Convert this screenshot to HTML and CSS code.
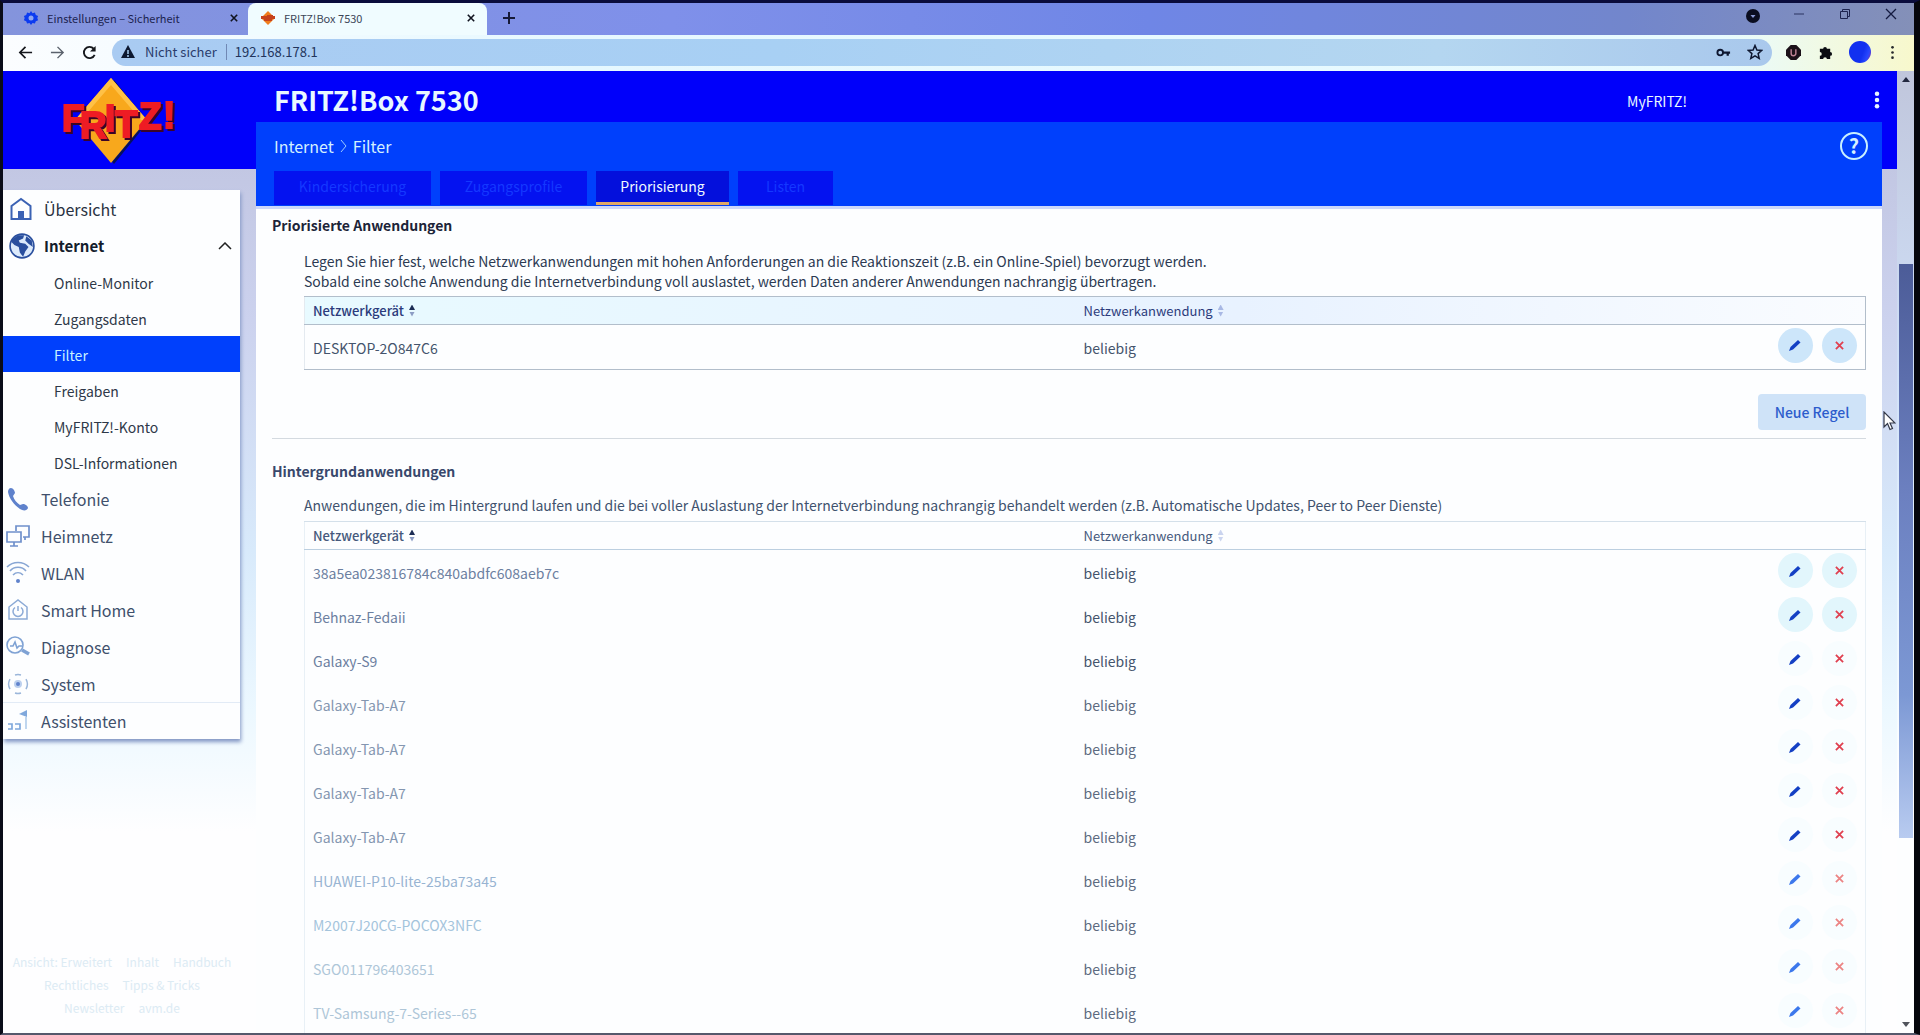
FILE: index.html
```
<!DOCTYPE html>
<html lang="de">
<head>
<meta charset="utf-8">
<title>FRITZ!Box 7530</title>
<link rel="stylesheet" href="styles.css">
</head>
<body>
<div class="screen">
  <header class="browser">
    <div class="tabstrip">
      <div class="tab">
        <svg class="fav" viewBox="0 0 16 16"><path d="M8 1l1.500 2.200 2.400-.6.9 2.300 2.300 1L14.300 8l.8 2.200-2.300 1-.9 2.300-2.400-.6L8 15l-1.500-2.100-2.400.6-.9-2.300-2.300-1L1.700 8 .9 5.900l2.300-1 .9-2.300 2.400.6z" fill="#0c3bf0"/><circle cx="8" cy="8" r="2.500" fill="#8fa6f0"/></svg>
        <span class="tab-title">Einstellungen – Sicherheit</span>
        <button class="tab-close" aria-label="Tab schließen"><svg viewBox="0 0 10 10"><path d="M1 1l8 8M9 1l-8 8" stroke="#10131f" stroke-width="2"/></svg></button>
      </div>
      <div class="tab active">
        <svg class="fav" viewBox="0 0 16 16"><path d="M8 1l7 7-7 7-7-7z" fill="#f07d1c"/><path d="M1 6h6v-1h6v1h2v3h-3v2H4V9H1z" fill="#c6421c"/></svg>
        <span class="tab-title">FRITZ!Box 7530</span>
        <button class="tab-close" aria-label="Tab schließen"><svg viewBox="0 0 10 10"><path d="M1 1l8 8M9 1l-8 8" stroke="#10131f" stroke-width="2"/></svg></button>
      </div>
      <button class="newtab" aria-label="Neuer Tab"><svg viewBox="0 0 12 12"><path d="M6 0v12M0 6h12" stroke="#161a38" stroke-width="2"/></svg></button>
      <div class="window-buttons">
        <button aria-label="Tabs suchen"><svg class="search" viewBox="0 0 16 16"><circle cx="8" cy="8" r="7" fill="#0a0d20"/><path d="M5.500 7h5L8 10z" fill="#8c9cd8"/></svg></button>
        <button aria-label="Minimieren"><svg viewBox="0 0 16 16"><path d="M3 8h10" stroke="#2b3360"/></svg></button>
        <button aria-label="Verkleinern"><svg viewBox="0 0 16 16" fill="none" stroke="#1e2450"><path d="M3.500 5.500h7v7h-7zM5.500 5.500v-2h7v7h-2"/></svg></button>
        <button aria-label="Schließen"><svg viewBox="0 0 16 16"><path d="M3 3l10 10M13 3L3 13" stroke="#141a40" stroke-width="1.300"/></svg></button>
      </div>
    </div>
    <div class="toolbar">
      <button class="nav" aria-label="Zurück"><svg viewBox="0 0 16 16" fill="none" stroke="#15171c" stroke-width="1.800"><path d="M15 8H2M8 2L2 8l6 6"/></svg></button>
      <button class="nav" aria-label="Vorwärts"><svg viewBox="0 0 16 16" fill="none" stroke="#5a616c" stroke-width="1.500"><path d="M1 8h13M8 2l6 6-6 6"/></svg></button>
      <button class="nav" aria-label="Neu laden"><svg viewBox="0 0 16 16" fill="none" stroke="#15171c" stroke-width="2"><path d="M13.500 10.500A6 6 0 1 1 12.500 4"/><path d="M14.500 1v6h-6z" fill="#15171c" stroke="none"/></svg></button>
      <div class="address">
        <svg class="warn" viewBox="0 0 14 14"><path d="M7 0l7 13H0z" fill="#0d1830"/><path d="M7 5v4M7 10v2" stroke="#a6cdf0" stroke-width="1.500"/></svg>
        <span class="insecure">Nicht sicher</span>
        <input class="url" type="text" value="192.168.178.1" aria-label="Adresse">
        <svg class="key" viewBox="0 0 16 16"><circle cx="4.500" cy="8" r="3" fill="none" stroke="#0e1730" stroke-width="2"/><path d="M7 8h8M12.500 8v3.500" stroke="#0e1730" stroke-width="2.400"/></svg>
        <svg class="star" viewBox="0 0 16 16"><path d="M8 1.500l1.900 4.500 4.900.4-3.700 3.200 1.100 4.800L8 11.800l-4.200 2.600 1.100-4.800L1.200 6.400l4.900-.4z" fill="none" stroke="#0e1730" stroke-width="1.500"/></svg>
      </div>
      <button class="ext" aria-label="uBlock"><svg viewBox="0 0 16 16"><path d="M5 0h6l5 5v6l-5 5H5l-5-5V5z" fill="#1b1119"/><path d="M5.500 4.500v4.500a2.500 2.500 0 0 0 5 0V4.500" fill="none" stroke="#c08496" stroke-width="1.500"/></svg></button>
      <button class="ext" aria-label="Erweiterungen"><svg viewBox="0 0 16 16"><path d="M2 4h3.500a2 2 0 1 1 4 0H13v3.500a2 2 0 1 1 0 4V15H9.500a2 2 0 0 0-4 0H2v-3.500a2 2 0 0 0 0-4z" fill="#0b0d12"/></svg></button>
      <button class="avatar" aria-label="Profil"></button>
      <button class="ext" aria-label="Menü"><svg viewBox="0 0 16 16" fill="#26282c"><circle cx="8" cy="2.500" r="1.400"/><circle cx="8" cy="8" r="1.400"/><circle cx="8" cy="13.500" r="1.400"/></svg></button>
    </div>
  </header>

  <div class="viewport">
    <div class="page">
      <aside class="side">
        <a class="logo" href="#" aria-label="FRITZ!">
          <svg viewBox="0 0 124 86">
            <path d="M52 2l34 42-34 42-34-42z" fill="#061060"/>
            <path d="M49 0l36 42-36 43-36-43z" fill="#f8a81c"/>
            <path d="M49 0l36 42h-6L49 7 19 42h-6z" fill="#ffc146"/>
            <text class="logo-text" x="0 18 43 53 77 101" y="53 60 53 59 51 50">FRITZ!</text>
          </svg>
        </a>
        <nav class="menu">
          <a class="item" href="#"><svg viewBox="0 0 24 24" fill="none" stroke="#3b62b4" stroke-width="2"><path d="M2.500 9L12 2l9.500 7v13h-19z"/><path d="M9 14h6v8H9z" fill="#3b62b4" stroke="none"/></svg>Übersicht</a>
          <a class="item open" href="#"><svg class="globe" viewBox="0 0 24 24"><circle cx="12" cy="12" r="11" fill="#dceafb" stroke="#2a4f9e" stroke-width="1.500"/><path d="M3 6l5-4 6 0-1 3-4 2 1 2 5 1 3 3-3 4-2 5-3-4-1-5-4-2-3-3zM16 3l5 4 1 6-4-3-3-3z" fill="#2a4f9e"/></svg>Internet<svg class="chev" viewBox="0 0 14 8"><path d="M1 7l6-6 6 6" fill="none" stroke="#222" stroke-width="1.500"/></svg></a>
          <a class="sub" href="#">Online-Monitor</a>
          <a class="sub" href="#">Zugangsdaten</a>
          <a class="sub current" href="#">Filter</a>
          <a class="sub" href="#">Freigaben</a>
          <a class="sub" href="#">MyFRITZ!-Konto</a>
          <a class="sub" href="#">DSL-Informationen</a>
          <a class="item low" href="#"><svg viewBox="0 0 24 24"><path d="M5 1c2 0 4 3 4 5l-2 3c1 4 4 7 7 9l3-1c2 0 5 2 5 4-1 3-5 3-8 1C8 18 3 11 2 5c0-2 1-4 3-4z" fill="#5f82cc"/></svg>Telefonie</a>
          <a class="item low" href="#"><svg viewBox="0 0 24 24" fill="none" stroke="#6f90cc" stroke-width="1.700"><path d="M10 7V2h13v11h-6M1 8h14v10H1zM8 18v4M4 22h8M19 13v3"/></svg>Heimnetz</a>
          <a class="item low" href="#"><svg viewBox="0 0 24 24" fill="none" stroke="#88a6d4" stroke-width="1.600"><path d="M1 6c6-6 16-6 22 0M4 10c4-5 12-5 16 0M7 14c3-3 7-3 10 0"/><circle cx="12" cy="20" r="2" fill="#5f82cc" stroke="none"/></svg>WLAN</a>
          <a class="item low" href="#"><svg viewBox="0 0 24 24" fill="none" stroke="#8caad6" stroke-width="1.500"><path d="M3 9l9-7 9 7v12H3z"/><path d="M9 9.500a5 5 0 1 0 6 0M12 8v5"/></svg>Smart Home</a>
          <a class="item low" href="#"><svg viewBox="0 0 24 24" fill="none" stroke="#7fa2d4" stroke-width="1.600"><circle cx="9" cy="10" r="8"/><path d="M4 11h3l2-4 2 6 2-2h3"/><path d="M16 15l7 4" stroke-width="3.500"/></svg>Diagnose</a>
          <a class="item low" href="#"><svg viewBox="0 0 24 24" fill="none" stroke="#9bb6da" stroke-width="1.500"><path d="M9 3a10 10 0 0 1 6 0M9 21a10 10 0 0 0 6 0M4 7a10 10 0 0 0 0 10M20 7a10 10 0 0 1 0 10"/><circle cx="12" cy="12" r="3" fill="#5f82cc" stroke="#bcd0ee" stroke-width="2"/></svg>System</a>
          <a class="item low last" href="#"><svg viewBox="0 0 24 24" fill="none" stroke="#7fa8dc" stroke-width="1.700"><path d="M2 15h4v5H2M9 15h5v5H9"/><path d="M13 5l8-4v7z" fill="#7fa8dc" stroke="none"/><path d="M20 8v12" stroke="#b4cfec"/></svg>Assistenten</a>
        </nav>
        <footer class="links">
          <div><a href="#">Ansicht: Erweitert</a><a href="#">Inhalt</a><a href="#">Handbuch</a></div>
          <div><a href="#">Rechtliches</a><a href="#">Tipps &amp; Tricks</a></div>
          <div><a href="#">Newsletter</a><a href="#">avm.de</a></div>
        </footer>
      </aside>

      <main class="main">
        <div class="top">
          <h1>FRITZ!Box 7530</h1>
          <a class="myfritz" href="#">MyFRITZ!</a>
          <button class="dots" aria-label="Menü"><svg viewBox="0 0 6 20" fill="#e8f4ff"><circle cx="3" cy="3" r="2.500"/><circle cx="3" cy="10" r="2.500"/><circle cx="3" cy="17" r="2.500"/></svg></button>
        </div>
        <div class="bluebar">
          <div class="crumbs">
            <span>Internet</span><svg viewBox="0 0 7 14"><path d="M1 1l5 6-5 6" fill="none" stroke="#9fcbff"/></svg><span>Filter</span>
            <button class="help" aria-label="Hilfe">?</button>
          </div>
          <nav class="tabs">
            <a class="t1" href="#">Kindersicherung</a>
            <a class="t2" href="#">Zugangsprofile</a>
            <a class="t3 on" href="#">Priorisierung</a>
            <a class="t4" href="#">Listen</a>
          </nav>
        </div>
        <div class="content">
          <section>
            <h2>Priorisierte Anwendungen</h2>
            <p>Legen Sie hier fest, welche Netzwerkanwendungen mit hohen Anforderungen an die Reaktionszeit (z.B. ein Online-Spiel) bevorzugt werden.<br>Sobald eine solche Anwendung die Internetverbindung voll auslastet, werden Daten anderer Anwendungen nachrangig übertragen.</p>
            <table class="first">
              <thead><tr><th class="dev">Netzwerkgerät<i class="sort asc"></i></th><th>Netzwerkanwendung<i class="sort"></i></th><th class="act"></th></tr></thead>
              <tbody><tr><td>DESKTOP-2O847C6</td><td>beliebig</td><td class="act"><div class="buttons"><button aria-label="Bearbeiten"><svg class="pen" viewBox="0 0 14 14"><path d="M1 13l1.500-4L10 2l2.500 2.500L5 11.500z"/></svg></button><button aria-label="Löschen"><svg class="del" viewBox="0 0 10 10"><path d="M1 1l8 8M9 1L1 9"/></svg></button></div></td></tr></tbody>
            </table>
            <div class="action"><button class="new">Neue Regel</button></div>
          </section>
          <section class="second">
            <h2>Hintergrundanwendungen</h2>
            <p>Anwendungen, die im Hintergrund laufen und die bei voller Auslastung der Internetverbindung nachrangig behandelt werden (z.B. Automatische Updates, Peer to Peer Dienste)</p>
            <table class="background">
              <thead><tr><th class="dev">Netzwerkgerät<i class="sort asc"></i></th><th>Netzwerkanwendung<i class="sort"></i></th><th class="act"></th></tr></thead>
              <tbody id="rules"></tbody>
            </table>
          </section>
        </div>
      </main>
    </div>
    <div class="scrollbar"><span class="up"></span><span class="thumb"></span><span class="down"></span></div>
  </div>
  <svg class="cursor" viewBox="0 0 13 20"><path d="M1 1v15l3.500-3.500L7 18.500l2.500-1L7 12h5z" fill="#fff" stroke="#333848" stroke-width="1.200"/></svg>
</div>
<script src="rules.js"></script>
</body>
</html>
```
FILE: rules.js
```
const devices = [
  "38a5ea023816784c840abdfc608aeb7c", "Behnaz-Fedaii", "Galaxy-S9",
  "Galaxy-Tab-A7", "Galaxy-Tab-A7", "Galaxy-Tab-A7", "Galaxy-Tab-A7",
  "HUAWEI-P10-lite-25ba73a45", "M2007J20CG-POCOX3NFC", "SGO011796403651",
  "TV-Samsung-7-Series--65"
];
const actions = document.querySelector(".first .buttons");
const body = document.getElementById("rules");
for (const name of devices) {
  const row = body.insertRow();
  row.insertCell().textContent = name;
  row.insertCell().textContent = "beliebig";
  const cell = row.insertCell();
  cell.className = "act";
  cell.append(actions.cloneNode(true));
}
```
FILE: styles.css
```
* { box-sizing: border-box; }
body {
  margin: 0;
  background: #000;
  font: 14px/20px "Noto Sans CJK SC", "Noto Sans", sans-serif;
  color: #2c3a52;
}
a { color: inherit; text-decoration: none; }
button { border: 0; padding: 0; background: none; font: inherit; color: inherit; display: flex; align-items: center; justify-content: center; }
svg { display: block; flex: none; }

.screen {
  height: 100vh;
  overflow: hidden;
  position: relative;
  display: flex;
  flex-direction: column;
  border-style: solid;
  border-width: 3px 6px 2px 3px;
  border-color: #0a0c3c #05060c #55586c #0a0c18;
}

/* browser frame */
.browser { flex: none; font-size: 11px; }
.tabstrip {
  height: 32px;
  display: flex;
  background: linear-gradient(90deg, #8494dc, #7f90ea 35%, #6f86e6 60%, #7286cc 85%, #8490b8);
}
.tab { width: 245px; display: flex; align-items: center; padding: 0 10px 2px 20px; color: #1c2350; }
.tab.active { width: 239px; padding: 0 12px 2px 12px; background: #f0fcff; border-radius: 8px 8px 0 0; color: #3c4658; }
.fav { width: 16px; height: 16px; margin-right: 8px; }
.tab-title { flex: 1; white-space: nowrap; }
.tab-close svg { width: 8px; height: 8px; }
.newtab { width: 44px; padding-bottom: 2px; }
.newtab svg { width: 12px; height: 12px; }
.window-buttons { margin-left: auto; display: flex; padding-right: 15px; gap: 30px; align-items: center; height: 22px; }
.window-buttons svg { width: 16px; height: 16px; }
.window-buttons .search { margin: 4px 0 0; }
.toolbar {
  height: 36px;
  display: flex;
  align-items: center;
  padding: 0 14px 2px 6px;
  background: linear-gradient(90deg, #fbfdff, #e6f8ff 30%, #e8fbff 90%, #f8f8cc);
}
.nav { width: 32px; justify-content: center; }
.nav svg { width: 15px; height: 15px; }
.address {
  flex: 1;
  margin: 0 13px 0 7px;
  height: 27px;
  border-radius: 14px;
  display: flex;
  align-items: center;
  padding: 0 9px;
  background: linear-gradient(90deg, #a9cbf2, #a8d0f4 40%, #b4d6f0 80%, #a9c8ec);
  color: #2a3c6c;
}
.warn { width: 14px; height: 14px; margin-right: 10px; }
.insecure { font-size: 13px; padding-right: 9px; border-right: 1px solid #7088b4; line-height: 16px; }
.url { flex: 1; border: 0; padding: 0 0 0 8px; background: none; font: inherit; font-size: 13px; color: #22345c; outline: 0; }
.key { width: 15px; height: 15px; margin-right: 16px; }
.star { width: 16px; height: 16px; }
.ext { width: 16px; margin-right: 16px; }
.ext:last-child { margin-right: 0; }
.ext svg { width: 15px; height: 15px; }
.avatar { width: 22px; height: 22px; border-radius: 11px; margin-right: 13px; background: linear-gradient(110deg, #1230f0 60%, #2848ff 80%, #a02890); }

/* page */
.viewport { flex: 1; min-height: 0; display: flex; }
.page {
  flex: 1;
  min-width: 0;
  overflow: hidden;
  display: flex;
  padding-right: 15px;
  background:
    linear-gradient(#0000fa, #0000fa) 0 0 / 100% 98px no-repeat,
    linear-gradient(#bcc0dc, #ccd2ee 250px, #d8eafb 480px, #ecf8ff 640px, #fefeff 760px);
}
.side { width: 253px; flex: none; display: flex; flex-direction: column; }
.logo { height: 98px; padding: 7px 0 0 59px; }
.logo svg { width: 124px; height: 86px; }
.logo-text { font: 700 37px "Liberation Sans", sans-serif; fill: #ee1c24; stroke: #ee1c24; stroke-width: 2px; filter: drop-shadow(2px 2px 0 #3a0428); }
.menu { width: 237px; margin-top: 21px; background: #fdfeff; box-shadow: 1px 3px 4px #8296c4; }
.item { height: 37px; display: flex; align-items: center; font-size: 16px; color: #2a3242; padding: 0 8px 0 6px; }
.item svg { width: 24px; height: 24px; margin-right: 11px; }
.item .globe { width: 26px; height: 26px; margin-right: 9px; }
.item .chev { width: 14px; height: 8px; margin: 0 0 0 auto; }
.item.open { font-weight: 700; color: #141c2c; font-size: 15px; }
.item.low { color: #40506c; padding-left: 3px; }
.item.last { border-top: 1px solid #e2ebf6; }
.sub { height: 36px; display: flex; align-items: center; padding: 2px 0 0 51px; font-size: 14px; color: #2e3848; }
.sub.current { background: #0040fc; color: #c8f0ff; }
.links { margin-top: 211px; width: 238px; font-size: 12px; line-height: 23px; color: #dcebf4; }
.links div { display: flex; justify-content: center; gap: 14px; }

.main { flex: 1; min-width: 0; }
.top { height: 51px; display: flex; align-items: center; padding-left: 18px; color: #e8f8ff; }
h1 { margin: 0; font-size: 27px; line-height: 40px; font-weight: 700; flex: 1; padding-top: 6px; }
.myfritz { font-size: 14px; padding-top: 8px; margin-right: 187px; }
.dots { padding-top: 6px; margin-right: 2px; }
.dots svg { width: 6px; height: 18px; }
.bluebar { height: 84px; padding: 0 14px 1px 18px; background: #0040fc; color: #d4f0ff; display: flex; flex-direction: column; justify-content: space-between; }
.crumbs { display: flex; align-items: center; font-size: 16px; height: 48px; gap: 6px; }
.crumbs svg { width: 7px; height: 14px; }
.help { margin-left: auto; width: 28px; height: 28px; border: 2px solid #c8f0ff; border-radius: 14px; font-size: 20px; font-weight: 700; line-height: 20px; }
.tabs { display: flex; gap: 9px; }
.tabs a { height: 34px; line-height: 31px; text-align: center; font-size: 14px; background: #0412f0; color: #1438ff; }
.tabs .t1 { width: 157px; }
.tabs .t2 { width: 147px; }
.tabs .t3 { width: 133px; }
.tabs .t4 { width: 95px; }
.tabs .on { background: #0410dc; color: #f0faff; border-bottom: 3px solid #e0a868; }

.content { background: #fdfeff; min-height: 830px; padding: 0 16px; border-top: 3px solid #ccd8fa; }
h2 { margin: 0; padding-top: 6px; font-size: 14px; line-height: 20px; font-weight: 700; color: #1c2438; }
p { margin: 16px 0 0; padding-left: 32px; white-space: nowrap; }
table { width: calc(100% - 32px); margin: 5px 0 0 32px; border-collapse: collapse; table-layout: fixed; border: 1px solid #b2becb; }
th, td { padding: 0 8px; text-align: left; font-weight: 400; }
th { height: 28px; font-size: 13px; line-height: 20px; border-bottom: 1px solid #b2becb; color: #2c3c7c; }
td { height: 45px; padding-top: 2px; color: #44546c; }
.first { border-left-color: #e4eaf0; }
.first thead { background: linear-gradient(90deg, #e8faff, #e8f2ff 60%, #fafcff); }
th.dev { width: 771px; font-weight: 500; }
th.act { width: 88px; padding: 0; }
td.act { padding: 0 0 4px; }
.sort { display: inline-block; width: 6px; height: 12px; margin-left: 5px; vertical-align: -1px; background: linear-gradient(#a8b8e4 5px, transparent 5px 7px, #a8b8e4 7px); clip-path: polygon(50% 0, 100% 45%, 100% 55%, 50% 100%, 0 55%, 0 45%); }
.sort.asc { background: linear-gradient(#1c2c54 5px, transparent 5px 7px, #8c9cc4 7px); }
.buttons { display: flex; gap: 9px; }
.buttons button { width: 35px; height: 35px; border-radius: 18px; background: #cde6fa; }
.pen { width: 14px; height: 14px; fill: #1440c4; }
.del { width: 9px; height: 9px; fill: none; stroke: #e04050; stroke-width: 2; }
.action { display: flex; justify-content: flex-end; padding: 24px 0 8px; border-bottom: 1px solid #d4dae0; }
.new { width: 108px; height: 36px; border-radius: 4px; background: #cfe3f8; color: #2c5ccc; font-size: 14px; font-weight: 500; }
.second h2 { padding-top: 22px; color: #38486c; }
.second p { color: #40526e; margin-top: 14px; }
.second table { margin-top: 6px; border-color: #e8f0f6; border-bottom: 0; }
.second th { color: #46597c; border-color: #bccfe0; border-top: 1px solid #d4e0ea; }
.second td { height: 44px; }
.second .act { padding-bottom: 2px; }
.second td:first-child { color: #6c80a0; }
.second .sort:not(.asc) { opacity: .6; }
.second .buttons button { background: #e2f6fc; }
.second tr:nth-child(n+3) button { background: #f8fdff; }
.second tr:nth-child(n+4) td { color: #5c6a80; }
.second tr:nth-child(n+4) td:first-child { color: #8496b0; }
.second tr:nth-child(n+8) td:first-child { color: #98b4d2; }
.second tr:nth-child(n+9) td:first-child { color: #a4c4dc; }
.second tr:nth-child(n+10) td:first-child { color: #aec6d8; }
.second tr:nth-child(n+8) .pen { fill: #3c78ec; }
.second tr:nth-child(n+8) .del { stroke: #ec8484; }

.scrollbar { width: 17px; flex: none; display: flex; flex-direction: column; align-items: center; background: linear-gradient(#c0c6dc, #d0e0f8 300px, #e6f4ff 500px, #fdfeff 700px); }
.up { margin: 6px 0 182px; border: 4px solid transparent; border-top: 0; border-bottom: 5px solid #222840; }
.thumb { width: 14px; flex: 0 1 574px; background: linear-gradient(#4c5c98, #6c80c0 40%, #7c98d4 75%, #b8cbf0); }
.down { margin: auto 0 6px; border: 4px solid transparent; border-bottom: 0; border-top: 5px solid #50545c; }
.cursor { position: absolute; left: 1880px; top: 408px; width: 13px; height: 20px; }
```
